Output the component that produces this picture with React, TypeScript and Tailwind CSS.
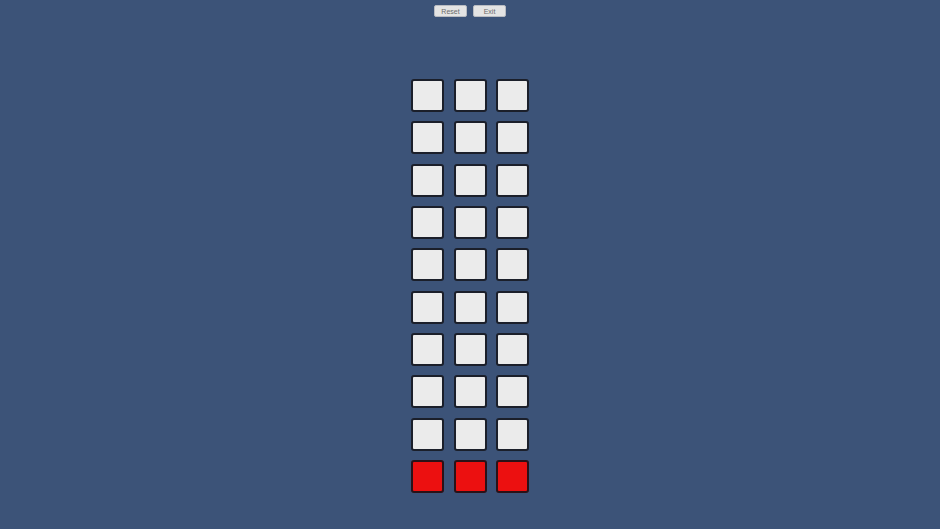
import React from "react";

const rows = 10;

const App = () => {
  return (
    <div
      className="w-[940px] h-[529px] bg-[#3c5378] flex flex-col items-center overflow-hidden"
      style={{ fontFamily: '"Liberation Sans", Arial, sans-serif' }}
    >
      <div className="flex gap-[6px] pt-[5px]">
        <button className="w-[33px] h-[12px] rounded-[2px] bg-[#e4e4e4] text-[#6b6b6b] text-[7px] leading-[12px] border border-[#b9bcc2]">
          Reset
        </button>
        <button className="w-[33px] h-[12px] rounded-[2px] bg-[#e4e4e4] text-[#6b6b6b] text-[7px] leading-[12px] border border-[#b9bcc2]">
          Exit
        </button>
      </div>
      <div className="mt-[62px] grid grid-cols-[33px_33px_33px] gap-x-[9.5px] gap-y-[9.33px]">
        {Array.from({ length: rows * 3 }).map((_, i) => {
          const last = i >= (rows - 1) * 3;
          return (
            <div
              key={i}
              className={
                last
                  ? "w-[33px] h-[33px] rounded-[3px] border-2 border-[#2a1218] bg-[#ec1010]"
                  : "w-[33px] h-[33px] rounded-[3px] border-2 border-[#1b1f2a] bg-[#ebebeb]"
              }
            />
          );
        })}
      </div>
    </div>
  );
};

export default App;
